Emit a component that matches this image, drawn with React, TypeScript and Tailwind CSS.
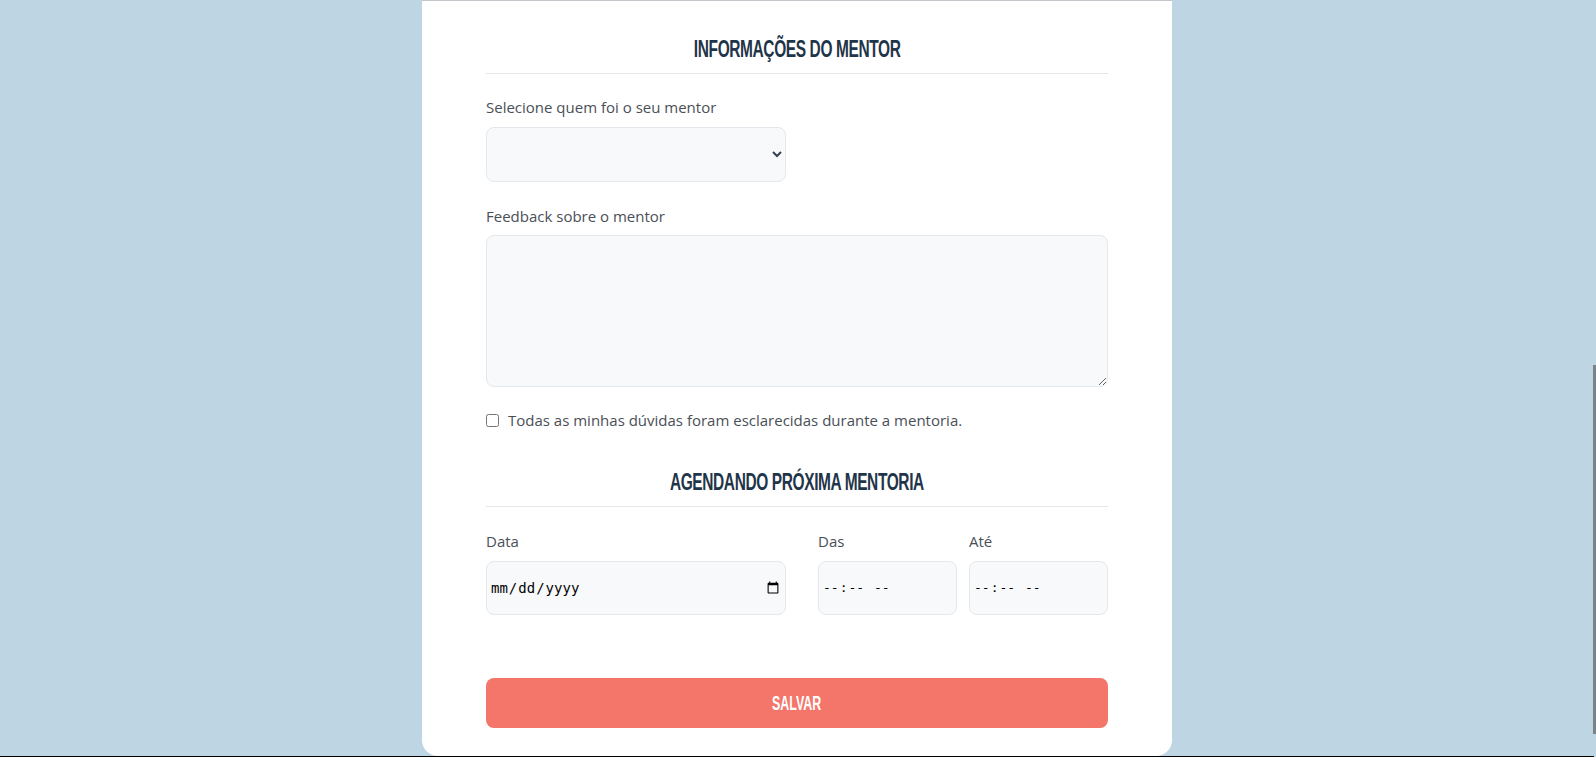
import { useState } from "react";

const body = { fontFamily: '"Open Sans", "Noto Sans", sans-serif' };

function SectionTitle({ children }: { children: string }) {
  return (
    <div className="border-b border-[#e3e6ea] pb-2 text-center">
      <h2 className="inline-block h-8 origin-center scale-x-[0.645] font-['Liberation_Sans',Arial,sans-serif] text-[24px] leading-8 font-bold tracking-tight text-[#1f3549]">
        {children}
      </h2>
    </div>
  );
}

function Label({ children }: { children: string }) {
  return <label className="block text-[15px] leading-5 text-[#4a4f57]">{children}</label>;
}

const field = "block w-full rounded-lg border border-[#e4e7eb] bg-[#f8f9fb]";

export default function App() {
  const [mentor, setMentor] = useState("");
  const [done, setDone] = useState(false);

  return (
    <div className="relative flex min-h-screen flex-col bg-[#bed6e3] pr-0.5" style={body}>
      <div className="mx-auto w-[750px] rounded-b-2xl border-t border-[#c2c6ca] bg-white px-16 pt-[32px] pb-[28px]">
        <SectionTitle>INFORMAÇÕES DO MENTOR</SectionTitle>

        <div className="mt-[23px]">
          <Label>Selecione quem foi o seu mentor</Label>
          <select
            value={mentor}
            onChange={(e) => setMentor(e.target.value)}
            className="mt-2.5 block h-[55px] w-[300px] rounded-lg border border-[#e4e7eb] bg-[#f8f9fb] pr-2 pl-3 text-sm text-[#374151]"
          >
            <option value=""></option>
            <option value="ana">Ana Souza</option>
            <option value="joao">João Lima</option>
          </select>
        </div>

        <div className="mt-6">
          <Label>Feedback sobre o mentor</Label>
          <textarea className={`mt-[9px] h-[152px] p-3 text-sm ${field}`} />
        </div>

        <label className="mt-[23px] flex items-center gap-[9px] text-[15px] leading-5 text-[#4a4f57]">
          <input
            type="checkbox"
            checked={done}
            onChange={(e) => setDone(e.target.checked)}
            className="m-0 h-[13px] w-[13px] accent-[#1f3549]"
          />
          Todas as minhas dúvidas foram esclarecidas durante a mentoria.
        </label>

        <div className="mt-9">
          <SectionTitle>AGENDANDO PRÓXIMA MENTORIA</SectionTitle>
        </div>

        <div className="mt-6 flex gap-8">
          <div className="w-[300px]">
            <Label>Data</Label>
            <input
              type="date"
              className={`mt-2.5 h-[54px] px-[3px] font-['DejaVu_Sans_Mono',monospace] text-[14px] text-black ${field}`}
            />
          </div>
          <div className="flex flex-1 gap-3">
            <div className="flex-1">
              <Label>Das</Label>
              <input
                type="time"
                className={`mt-2.5 h-[54px] px-[3px] font-['DejaVu_Sans_Mono',monospace] text-[13px] tracking-[0.8px] text-black [&::-webkit-calendar-picker-indicator]:hidden ${field}`}
              />
            </div>
            <div className="flex-1">
              <Label>Até</Label>
              <input
                type="time"
                className={`mt-2.5 h-[54px] px-[3px] font-['DejaVu_Sans_Mono',monospace] text-[13px] tracking-[0.8px] text-black [&::-webkit-calendar-picker-indicator]:hidden ${field}`}
              />
            </div>
          </div>
        </div>

        <button className="mt-[63px] flex h-[50px] w-full items-center justify-center rounded-lg bg-[#f4766a]">
          <span className="inline-block origin-center scale-x-[0.62] font-['Liberation_Sans',Arial,sans-serif] text-[20px] font-bold text-white">
            SALVAR
          </span>
        </button>
      </div>
      <div className="h-px w-full bg-black" />
      <div className="pointer-events-none absolute top-[365px] right-0 h-[369px] w-[3px] bg-[#7b8389]" />
    </div>
  );
}
